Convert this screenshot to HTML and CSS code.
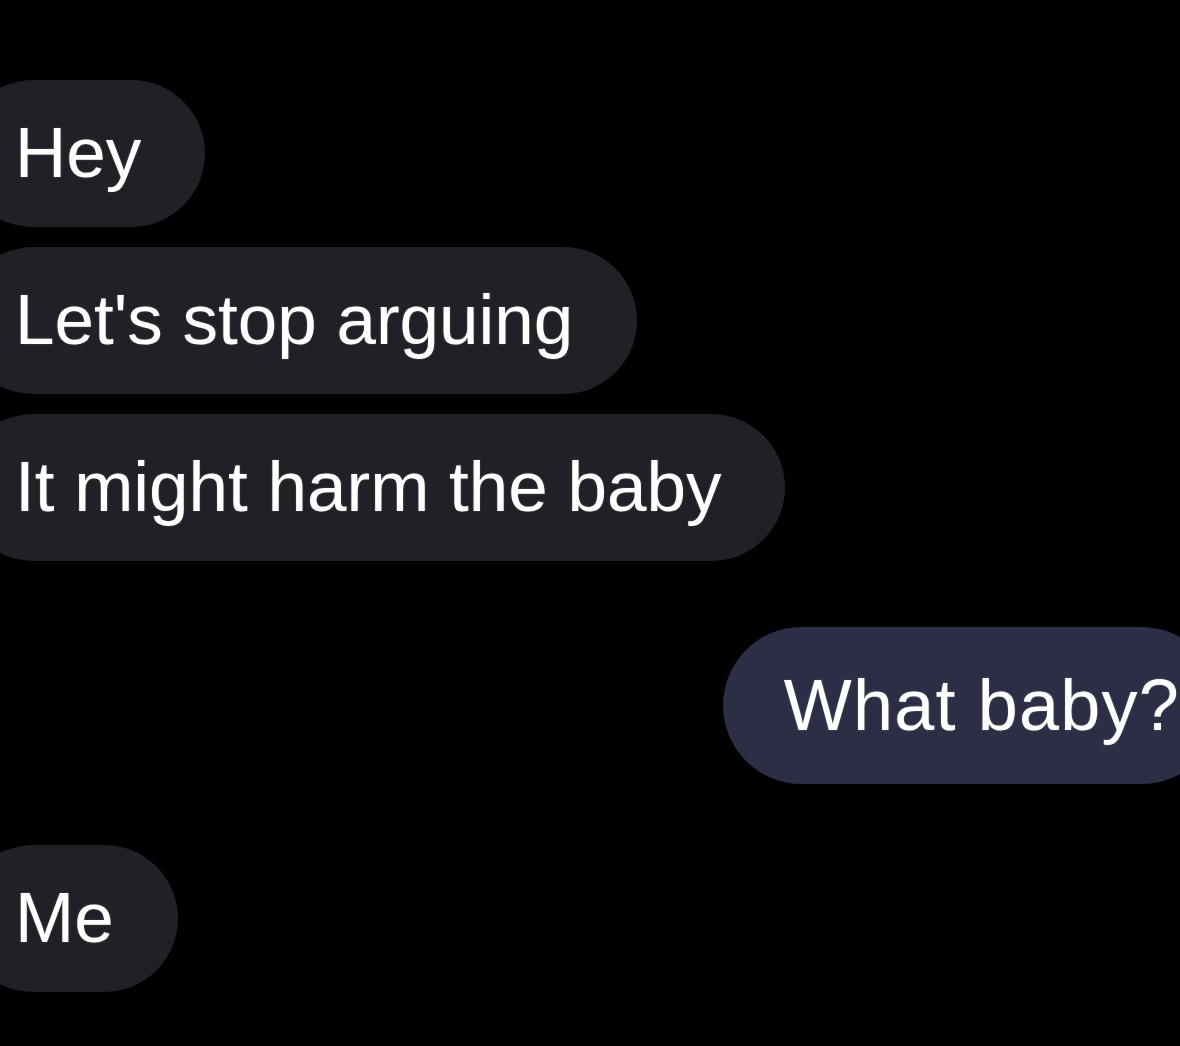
FILE: index.html
```html
<!DOCTYPE html>
<html lang="en">
<head>
  <meta charset="UTF-8">
  <meta name="viewport" content="width=device-width, initial-scale=1.0">
  <title>Messages</title>
  <link rel="stylesheet" href="styles.css">
</head>
<body>
  <div class="thread">
    <div class="group">
      <div class="bubble in">Hey</div>
      <div class="bubble in">Let's stop arguing</div>
      <div class="bubble in">It might harm the baby</div>
    </div>

    <div class="group out-group">
      <div class="bubble out">What baby?</div>
    </div>

    <div class="group last-group">
      <div class="bubble in">Me</div>
    </div>
  </div>
</body>
</html>
```

FILE: styles.css
```css
html, body {
  background-color: #000;
}
body {
  margin: 0;
  font-family: "Liberation Sans", Arial, sans-serif;
  color: #fff;
  overflow: hidden;
}
.thread {
  display: flex;
  flex-direction: column;
  padding-top: 80px;
}
.group {
  display: flex;
  flex-direction: column;
  align-items: flex-start;
  gap: 20px;
}
.out-group {
  align-items: flex-end;
  margin-top: 66px;
}
.last-group {
  margin-top: 61px;
}
.bubble {
  font-size: 71px;
  line-height: 82px;
  padding: 32px 64px 33px 15px;
  border-radius: 80px;
  white-space: nowrap;
  text-shadow: 0 0 2px rgba(255, 255, 255, 0.25);
}
.in {
  background-color: #202026;
  margin-left: -40px;
  padding-left: 55px;
}
.out {
  background-color: #2b2e45;
  font-size: 72px;
  letter-spacing: 1.2px;
  padding: 37px 40px 38px 61px;
  margin-right: -40px;
}
```
